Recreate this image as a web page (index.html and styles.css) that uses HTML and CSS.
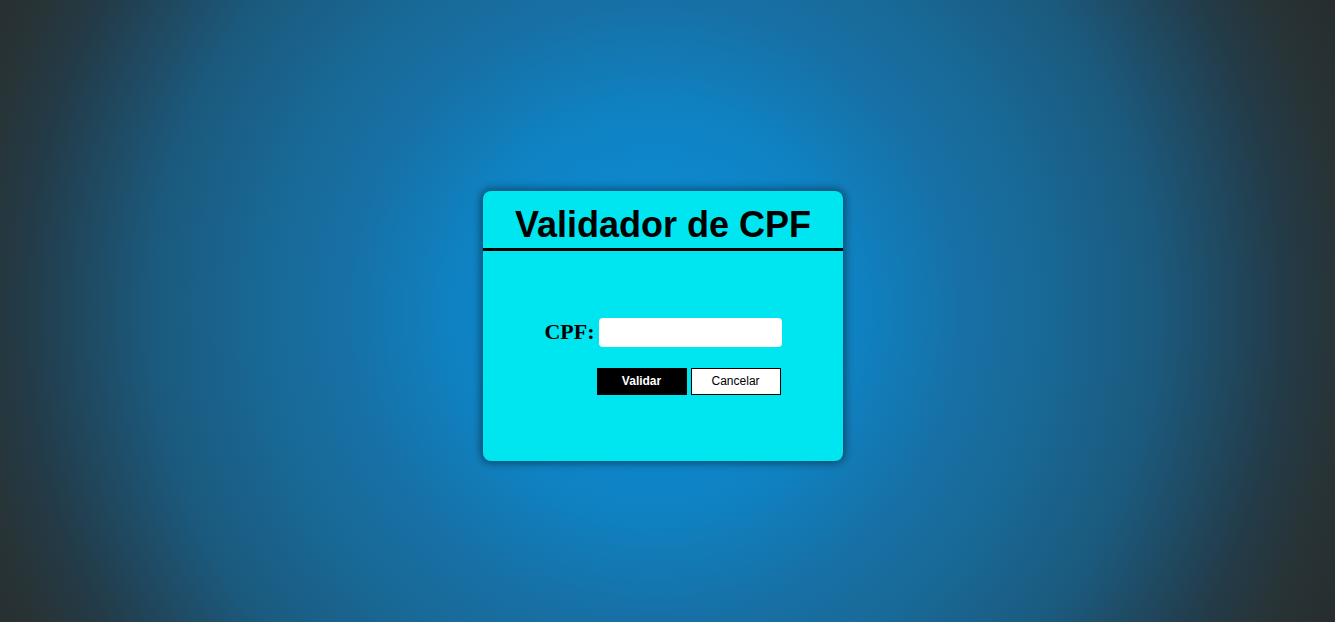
FILE: index.html
```html
<!DOCTYPE html>
<html lang="pt-BR">
<head>
<meta charset="utf-8">
<title>Validador de CPF</title>
<link rel="stylesheet" href="styles.css">
</head>
<body>
<main class="page">
  <section class="card">
    <header class="card-header">
      <h1 class="title">Validador de CPF</h1>
    </header>
    <div class="card-body">
      <form class="form">
        <label class="label" for="cpf">CPF:</label>
        <input class="input" id="cpf" type="text">
        <div class="actions">
          <button type="button" class="btn btn-primary">Validar</button>
          <button type="button" class="btn btn-secondary">Cancelar</button>
        </div>
      </form>
    </div>
  </section>
</main>
</body>
</html>
```
FILE: styles.css
```css
html, body {
  margin: 0;
  padding: 0;
  height: 100%;
}
body {
  background: radial-gradient(circle 760px at 49% 50%, #0b8fdc 0px, #0c89d0 100px, #0f82c2 200px, #1770a5 310px, #186a98 380px, #1b5a7e 500px, #233b48 630px, #283335 690px, #262b2d 760px);
  font-family: "Liberation Sans", Arial, sans-serif;
}
.page {
  height: 622px;
  box-sizing: border-box;
  display: flex;
  justify-content: center;
  align-items: flex-start;
  padding-top: 191px;
  padding-right: 9px;
}
.card {
  width: 360px;
  height: 270px;
  background: #00e6f0;
  border-radius: 8px;
  box-shadow: 0 0 8px 2px rgba(0, 0, 0, 0.45);
  display: flex;
  flex-direction: column;
  overflow: hidden;
}
.card-header {
  height: 57px;
  border-bottom: 3px solid #000;
  display: flex;
  align-items: center;
  justify-content: center;
}
.title {
  margin: 0;
  font-size: 36px;
  font-weight: bold;
  color: #000;
  line-height: 1;
  padding-top: 11px;
}
.card-body {
  flex: 1;
  display: flex;
  align-items: center;
  justify-content: center;
}
.form {
  display: grid;
  grid-template-columns: auto 184px;
  column-gap: 3px;
  row-gap: 21px;
  align-items: center;
}
.label {
  font-family: "Liberation Serif", "Times New Roman", serif;
  font-weight: bold;
  font-size: 22px;
  color: #000;
}
.input {
  box-sizing: border-box;
  width: 183px;
  height: 29px;
  border: none;
  border-radius: 4px;
  background: #fff;
  margin-left: 1px;
  outline: none;
}
.actions {
  grid-column: 2;
  display: flex;
  gap: 4px;
  margin-left: -1px;
}
.btn {
  box-sizing: border-box;
  width: 90px;
  height: 27px;
  font-family: "Liberation Sans", Arial, sans-serif;
  font-size: 12px;
  border: 1px solid #000;
  border-radius: 0;
  padding: 0;
  cursor: pointer;
}
.btn-primary {
  background: #000;
  color: #fff;
  font-weight: bold;
}
.btn-secondary {
  background: #fff;
  color: #000;
}
```
